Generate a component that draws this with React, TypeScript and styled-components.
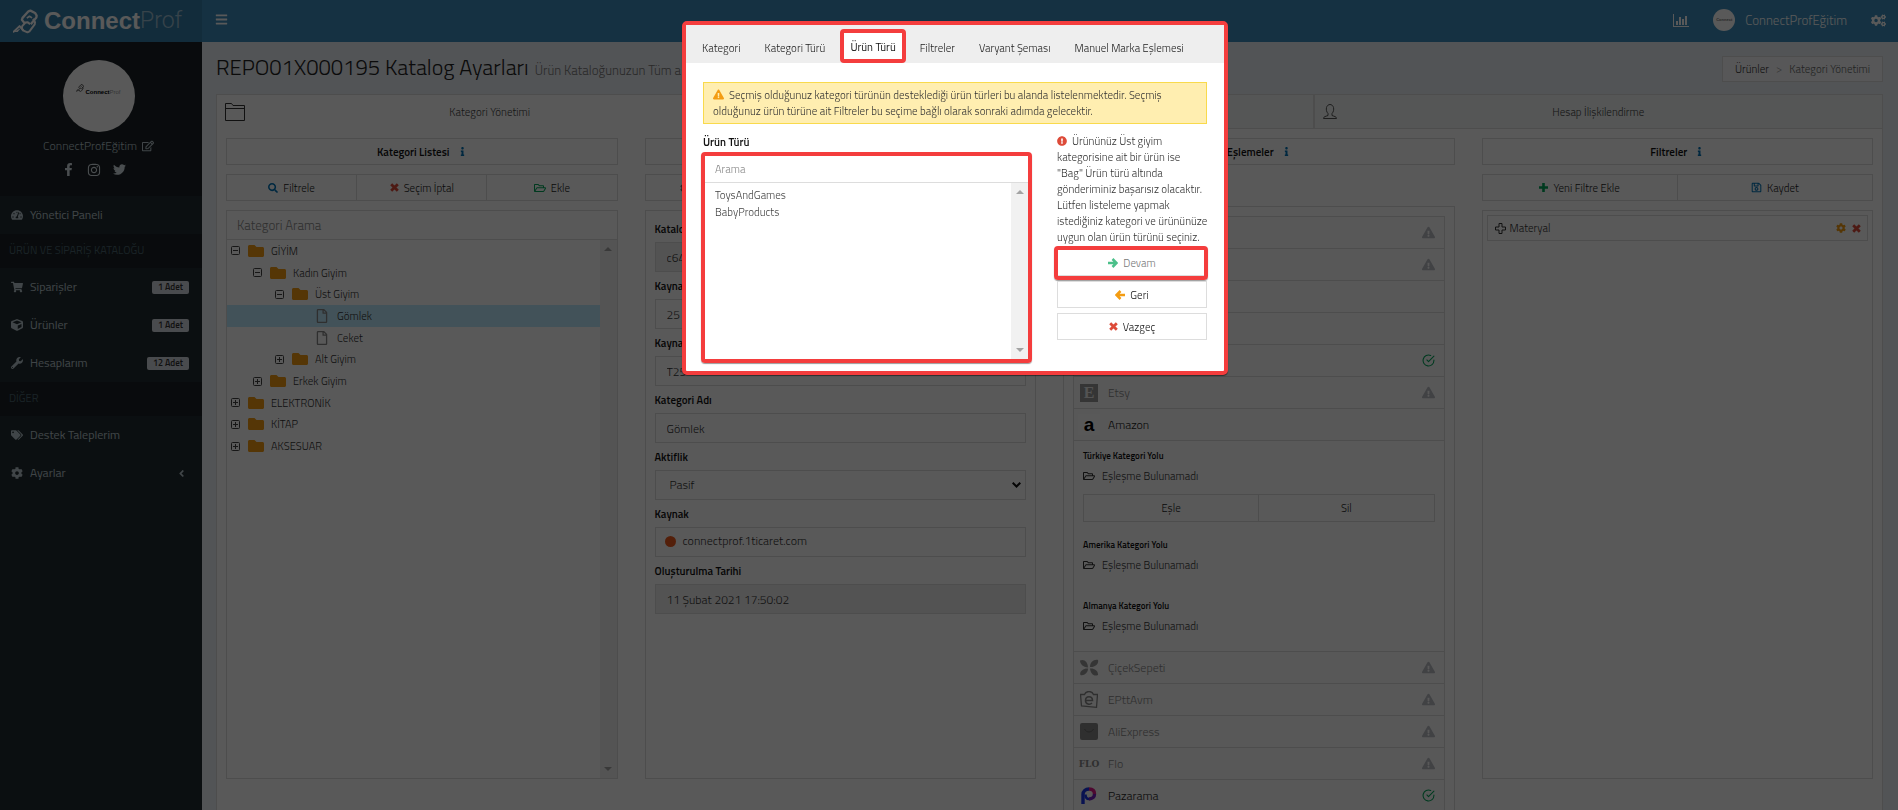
import React from 'react';
import styled, { createGlobalStyle, css } from 'styled-components';
import {
  FaAngleLeft, FaBars, FaCog, FaCogs, FaCube, FaExclamationCircle, FaExclamationTriangle, FaFacebookF,
  FaFolder, FaInfo, FaInstagram, FaRegEdit, FaRegFile, FaRegFolderOpen, FaRegSave, FaSearch,
  FaShoppingCart, FaTachometerAlt, FaTags, FaTwitter, FaWrench,
} from 'react-icons/fa';
import { FiCheckCircle } from 'react-icons/fi';

const c = {
  blue: '#3c8dbc', blueDark: '#367fa9', side: '#222d32', sideDark: '#1a2226', page: '#ecf0f5',
  line: '#dddddd', text: '#333333', strong: '#111111', muted: '#666666', red: '#dd4b39',
  green: '#00a65a', orange: '#f39c12', info: '#0073b7', mark: '#f43d3d',
};

const GlobalStyle = createGlobalStyle`
  *, *::before, *::after { box-sizing: border-box; }
  body {
    margin: 0; overflow: hidden; background: ${c.page}; color: ${c.text};
    font: 300 11px/16px 'Titillium Web', 'Roboto', sans-serif;
  }
  h1, h2, p, ul { margin: 0; padding: 0; font-weight: inherit; font-size: inherit; }
  ul { list-style: none; }
  button, input, select { font: inherit; color: inherit; border-radius: 0; margin: 0; }
  button { cursor: pointer; }
  a { color: inherit; text-decoration: none; }
  svg { flex: none; display: block; }
`;

/* ---------- top bar ---------- */
const Header = styled.header`display: flex; height: 42px; background: ${c.blue}; color: #fff;`;
const Brand = styled.a`
  display: flex; align-items: center; width: 202px; padding: 0 0 0 13px; gap: 6px;
  background: ${c.blueDark}; color: #fff;
`;
const BrandName = styled.span`font: 700 24px/42px 'Liberation Sans', Arial, sans-serif; display: flex;`;
const BrandThin = styled.span`font: 300 23px/42px Roboto, sans-serif; color: #9fc0d4;`;
const BarButton = styled.button`
  display: flex; align-items: center; padding: 0 13px 4px; border: 0; background: none; color: #fff;
`;
const BarRight = styled.nav`display: flex; align-items: center; margin-left: auto; padding-bottom: 2px;`;
const BarLink = styled.a`display: flex; align-items: center; gap: 10px; padding: 0 12px; font-size: 13px;`;
const SmallAvatar = styled.span`
  display: grid; place-items: center; width: 22px; height: 22px; border-radius: 50%; background: #fff;
  color: #777; font: 700 4px/6px 'Liberation Sans', sans-serif;
`;

/* ---------- sidebar ---------- */
const Shell = styled.div`display: grid; grid-template-columns: 202px minmax(0, 1fr); min-height: calc(100vh - 42px);`;
const Sidebar = styled.aside`background: ${c.side}; color: #b8c7ce; font-size: 12px; font-weight: 400;`;
const Profile = styled.div`
  display: flex; flex-direction: column; align-items: center; height: 154px; padding: 18px 5px 0 0;
  background: ${c.sideDark};
`;
const Avatar = styled.span`
  display: flex; justify-content: center; padding-top: 24px; gap: 1px; width: 72px; height: 72px;
  border-radius: 50%; background: #fff; color: #000;
`;
const AvatarName = styled.span`font: 700 6px/16px 'Liberation Sans', sans-serif; i { font-style: normal; font-weight: 400; color: #999; }`;
const ProfileName = styled.a`display: flex; align-items: center; gap: 5px; margin-top: 6px; font-weight: 300; color: #b8c7ce;`;
const Social = styled.div`display: flex; gap: 12px; margin-top: 9px; padding-right: 10px; color: #d5dfe4;`;
const SideItem = styled.a`display: flex; align-items: center; height: 38px; padding: 0 13px 0 11px; gap: 6px;`;
const SideIcon = styled.span`display: flex; width: 13px;`;
const SideTitle = styled.h2`
  height: 34px; padding-left: 9px; background: ${c.sideDark}; color: #4b646f; font-size: 11px; line-height: 32px;
`;
const Badge = styled.span`
  margin-left: auto; height: 13px; padding: 0 6px; border-radius: 2px; background: #d2d6de; color: #333;
  font-size: 9px; font-weight: 600; line-height: 12px;
`;
const Caret = styled(FaAngleLeft)`margin-left: auto; margin-right: 2px;`;

/* ---------- page ---------- */
const Main = styled.main`padding: 14px 15px 0 14px;`;
const TitleRow = styled.div`display: flex; align-items: flex-start; height: 38px; white-space: nowrap;`;
const Title = styled.h1`font-size: 22px; font-weight: 300; line-height: 22px; color: #222;`;
const SubTitle = styled.small`margin-left: 6px; font-size: 13px; color: #777;`;
const Crumbs = styled.nav`
  display: flex; align-items: center; gap: 7px; height: 26px; margin-left: auto; padding: 0 12px;
  border: 1px solid ${c.line}; background: #f9fafc; color: ${c.muted};
  a { color: #333; } span { color: #999; }
`;
const Box = styled.section`height: calc(100vh - 60px); border: 1px solid ${c.line}; background: #fff;`;
const Tabs = styled.div`display: grid; grid-template-columns: 546fr 551fr 570fr; height: 34px;`;
const Tab = styled.button<{ $on?: boolean }>`
  display: grid; grid-template-columns: 20px 1fr 20px; align-items: center; padding: 0 8px; border: 0;
  background: #fff; color: #444;
  ${p => !p.$on && css`background: #f3f7f6; border-left: 2px solid ${c.line}; border-bottom: 1px solid ${c.line};`}
`;
const Columns = styled.div`
  display: grid; grid-template-columns: repeat(4, minmax(0, 1fr)); align-items: start; gap: 27px; padding: 9px;
`;
const Column = styled.div`display: flex; flex-direction: column; gap: 9px;`;
const ColumnTitle = styled.h2`
  display: flex; align-items: center; justify-content: center; gap: 8px; height: 27px;
  border: 1px solid ${c.line}; color: ${c.strong}; font-weight: 600; svg { color: ${c.info}; }
`;
const ButtonRow = styled.div`display: flex; height: 27px; border: 1px solid ${c.line};`;
const RowButton = styled.button<{ $start?: boolean }>`
  display: flex; flex: 1; align-items: center; justify-content: ${p => (p.$start ? 'flex-start' : 'center')};
  gap: 5px; padding: 0 ${p => (p.$start ? 34 : 8)}px; border: 0; background: #fff; color: #222; white-space: nowrap;
  & + & { border-left: 1px solid ${c.line}; }
`;
const Spacer = styled.div`height: 23px;`;
const Panel = styled.div<{ $pad: number; $grow?: boolean }>`
  min-height: calc(100vh - 241px); padding: ${p => p.$pad}px; border: 1px solid ${c.line};
  ${p => !p.$grow && css`height: calc(100vh - 241px);`}
`;
const Search = styled.input<{ $small?: boolean }>`
  display: block; width: 100%; height: ${p => (p.$small ? 27 : 29)}px; padding: 0 10px; border: 0; outline: 0;
  border-bottom: 1px solid ${c.line}; font-size: ${p => (p.$small ? 11 : 13)}px; background: #fff;
  &::placeholder { color: #888; opacity: 1; }
`;
const TreeBody = styled.div`display: flex; height: calc(100% - 29px);`;
const Tree = styled.ul`
  flex: 1; display: grid; grid-auto-rows: 1fr; height: 217px;
`;
const Node = styled.li<{ $depth: number; $on?: boolean }>`
  display: flex; align-items: center; padding-left: ${p => 4 + p.$depth * 22}px;
  background: ${p => (p.$on ? '#beebff' : 'transparent')};
`;
const Toggle = styled.button`display: flex; width: 9px; padding: 0; border: 0; background: none; color: #444;`;
const NodeIcon = styled.span`display: flex; justify-content: center; width: 16px; margin: 0 7px 0 8px;`;
const Rail = styled.div`
  display: flex; flex-direction: column; justify-content: space-between; align-items: center; width: 17px;
  padding: 7px 0; background: #f1f1f1; color: #a3a3a3;
`;

/* ---------- form ---------- */
const Form = styled.form`display: grid; gap: 5px;`;
const Field = styled.div`display: grid; gap: 4px;`;
const Label = styled.label`color: ${c.strong}; font-weight: 600; line-height: 18px;`;
const control = css`width: 100%; height: 30px; border: 1px solid ${c.line}; color: #333; font-size: 12px; outline: 0;`;
const Input = styled.input`${control} padding: 0 11px; background: #fff; &:read-only { background: #eee; }`;
const SelectWrap = styled.div`display: grid; > * { grid-area: 1 / 1; } svg { align-self: center; justify-self: end; margin-right: 5px; pointer-events: none; }`;
const Select = styled.select`${control} padding: 0 14px; background: #fff; appearance: none;`;
const SourceBox = styled.output`${control} display: flex; align-items: center; gap: 7px; padding: 0 9px 2px;`;
const Dot = styled.span`width: 11px; height: 11px; border-radius: 50%; background: #ee5a1e;`;

/* ---------- marketplaces ---------- */
const Markets = styled.ul`border: 1px solid ${c.line}; border-top: 0;`;
const Market = styled.li`border-top: 1px solid ${c.line}; background: #fbfbfb;`;
const MarketHead = styled.div<{ $off?: boolean }>`
  display: grid; grid-template-columns: 22px 1fr 14px; align-items: center; gap: 8px; height: 31px;
  padding: 0 8px 0 4px; color: ${p => (p.$off ? '#888' : '#222')}; font-size: 12px;
`;
const Mark = styled.span`display: grid; place-items: center;`;
const EtsyMark = styled.b`width: 18px; background: #999; color: #eee; font: 700 16px/18px 'Liberation Serif', serif; text-align: center;`;
const AmazonMark = styled.b`width: 22px; background: #fff; color: #000; font: 700 19px/21px 'Liberation Sans', sans-serif; text-align: center;`;
const FloMark = styled.b`color: #888; font: 700 9px/12px 'DejaVu Serif', serif;`;
const MarketBody = styled.div`height: 211px; padding: 8px 9px 0; border-top: 1px solid ${c.line}; background: #fff;`;
const Path = styled.div<{ $after: number }>`margin-bottom: ${p => p.$after}px;`;
const PathLabel = styled.h2`font-size: 9px; font-weight: 600; line-height: 14px; color: ${c.strong};`;
const PathValue = styled.p`display: flex; align-items: center; gap: 7px; margin-top: 3px; line-height: 20px;`;
const PathButtons = styled(ButtonRow)`height: 28px; margin-top: 8px;`;
const FilterItem = styled.div`
  display: flex; align-items: center; gap: 4px; height: 26px; padding: 0 5px 0 7px; border: 1px solid ${c.line};
  span { flex: 1; }
`;
const IconButton = styled.button`display: flex; padding: 0 1px; border: 0; background: none;`;

/* ---------- dialog ---------- */
const Backdrop = styled.div`
  position: fixed; inset: 0; display: flex; justify-content: center; align-items: flex-start;
  padding: 21px 0 0 12px; background: rgba(0, 0, 0, 0.65);
`;
const Dialog = styled.div`
  width: 546px; border: 4px solid ${c.mark}; border-radius: 5px; background: #fff; color: #333;
  box-shadow: 0 1px 1px rgba(0, 0, 0, 0.5);
`;
const Steps = styled.div`display: flex; align-items: flex-end; height: 38px; padding: 0 4px; background: #eee;`;
const Step = styled.button<{ $on?: boolean }>`
  height: 34px; padding: 3px 12px 0; border: 0; background: none; color: #222; white-space: nowrap;
  ${p => p.$on && css`
    padding: 2px 6px 0; margin: 0 2px 0 3px; border: 4px solid ${c.mark}; border-radius: 4px; background: #fff;
    color: #111; font-weight: 400;
  `}
`;
const DialogBody = styled.div`padding: 19px 17px 8px;`;
const Alert = styled.p`
  padding: 4px 9px; border: 1px solid #f9da4c; background: #ffeeb0;
  svg { display: inline-block; vertical-align: -1px; margin-right: 5px; }
`;
const Split = styled.div`display: grid; grid-template-columns: minmax(0, 1fr) 150px; gap: 25px; margin-top: 9px;`;
const Picker = styled.div`
  height: 211px; margin: 1px 0 0 -2px; border: 4px solid ${c.mark}; border-radius: 4px;
  box-shadow: 0 1px 1px rgba(0, 0, 0, 0.4);
`;
const PickerBody = styled.div`display: flex; height: 176px;`;
const Options = styled.ul`flex: 1; padding: 4px 10px;`;
const Option = styled.li`line-height: 17px; color: #444;`;
const Notice = styled.p`
  padding-bottom: 4px; white-space: nowrap;
  svg { display: inline-block; vertical-align: -1px; margin-right: 5px; color: ${c.red}; }
`;
const Actions = styled.div`display: grid; gap: 5px;`;
const Action = styled.button<{ $marked?: boolean }>`
  position: relative; display: flex; align-items: center; justify-content: center; gap: 5px; height: 27px;
  border: 1px solid ${c.line}; background: #fff; color: #111;
  ${p => p.$marked && css`
    color: #777; svg { opacity: 0.7; }
    &::after {
      content: ''; position: absolute; inset: -4px -2px -5px -4px; border: 4px solid ${c.mark}; border-radius: 4px;
      box-shadow: 0 1px 1px rgba(0, 0, 0, 0.4);
    }
  `}
`;

/* ---------- drawings ---------- */
const ChainLogo = ({ size, color }: { size: number; color: string }) => (
  <svg width={size} height={size} viewBox="0 0 76 76" fill="none" stroke={color} strokeWidth="7" strokeLinejoin="round">
    <path d="M36 44 27 33 29 27 47 7 53 5 67 12 72 20 71 26 54 46" />
    <path d="M61 30 67 40 66 47 50 68 44 71 30 65 27 58 28 52 38 41 44 40 52 46" strokeWidth="6" />
    <path d="M42 28 50 22 58 27" strokeWidth="5" />
    <path d="M0 71 20 52 32 66" strokeWidth="6" />
    <path d="M2 70h12L24 58z" fill={color} stroke="none" />
  </svg>
);
const ChartIcon = () => (
  <svg width="16" height="13" viewBox="0 0 16 13" fill="currentColor">
    <path d="M0 0h1v12h15v1H0zM3 7h2v4H3zM6 3h2v8H6zM9 5h2v6H9zM12 2h2v9h-2z" />
  </svg>
);
const FolderOutline = () => (
  <svg width="20" height="18" viewBox="0 0 20 18" fill="none" stroke="#333"><path d="M.5 17.500V.5h6l1.500 2h11.500v15zM.5 5.500h19" /></svg>
);
const PersonOutline = () => (
  <svg width="14" height="15" viewBox="0 0 14 15" fill="none" stroke="#555">
    <path d="M.5 14.500h13M.5 14.500c0-2 2-2 4.500-3V9.500C3.500 8 3 5.500 3.500 3.500 4 1.500 5.500.5 7 .5s3 1 3.500 3C11 5.500 10.500 8 9 9.500v2c2.500 1 4.500 1 4.500 3" />
  </svg>
);
const ToggleIcon = ({ open }: { open: boolean }) => (
  <svg width="9" height="9" viewBox="0 0 9 9" fill="none" stroke="currentColor">
    <rect x=".5" y=".5" width="8" height="8" rx="1" /><path d={open ? 'M2 4.500h5' : 'M2 4.500h5M4.500 2v5'} />
  </svg>
);
const Arrow = ({ down }: { down?: boolean }) => (
  <svg width="8" height="4" viewBox="0 0 8 4" fill="currentColor"><path d={down ? 'M0 0h8L4 4z' : 'M0 4h8L4 0z'} /></svg>
);
const Cross = () => (
  <svg width="9" height="9" viewBox="0 0 9 9" stroke={c.red} strokeWidth="2.800"><path d="M1.200 1.200 7.800 7.800M7.800 1.200 1.200 7.800" /></svg>
);
const Plus = () => (
  <svg width="9" height="9" viewBox="0 0 9 9" stroke={c.green} strokeWidth="2.600"><path d="M0 4.500h9M4.500 0v9" /></svg>
);
const WayArrow = ({ back }: { back?: boolean }) => (
  <svg width="10" height="10" viewBox="0 0 10 10" fill="none" stroke={back ? c.orange : c.green} strokeWidth="2.500">
    <path d={back ? 'M10 5H2M5.500 1 1.500 5l4 4' : 'M0 5h8M4.500 1l4 4-4 4'} />
  </svg>
);
const CrossOutline = () => (
  <svg width="11" height="11" viewBox="0 0 11 11" fill="none" stroke="#333" strokeLinejoin="round">
    <path d="M4 .5h3V4h3.500v3H7v3.500H4V7H.5V4H4z" />
  </svg>
);
const SelectArrow = () => (
  <svg width="9" height="6" viewBox="0 0 9 6" fill="none" stroke="#111" strokeWidth="2"><path d="m.7.7 3.800 3.800L8.300.7" /></svg>
);
const FlowerMark = () => (
  <svg width="20" height="18" viewBox="0 0 20 18" fill="#999">
    <path d="M9 8.500C4 8 1 5 1 1.500 5-.5 9 3 9 8.500zM11 8c0-5 4-8 8-7 1 4-3 7.500-8 7zM9 9.500C9 14 5 17 1.500 16 0 13 4 9 9 9.500zM11 9.500c4.500-.5 8.500 2.500 8 6.500-4 2-7.500-1.500-8-6.500z" />
  </svg>
);
const BagMark = () => (
  <svg width="18" height="17" viewBox="0 0 18 17" fill="none" stroke="#888" strokeWidth="1.300">
    <path d="M4.500 3.500h-4l1 11.500 15 1.300 1-12.800h-4C12-.5 6-.5 4.500 3.500z" />
    <path d="M5.500 9.500h7c0-5-7-5-7 0 0 4 4.500 4.500 6.500 2.500" strokeWidth="1.500" />
  </svg>
);
const ExpressMark = () => (
  <svg width="18" height="17" viewBox="0 0 18 17"><rect width="18" height="17" rx="2" fill="#888" /><path d="M4.500 6c2 4 7 4 9 0" fill="none" stroke="#666" /></svg>
);
const PazaramaMark = () => (
  <svg width="16" height="17" viewBox="0 0 16 17" fill="none" strokeWidth="3.400">
    <path d="M2 17V7.500C2 4 4.500 2 8 2" stroke="#1a35e8" />
    <path d="M8 2c3.500 0 5.500 2 5.500 5" stroke="#e0188a" />
    <path d="M13.500 7c0 3-2 5-5.500 5" stroke="#7a1fc0" />
    <path d="M8 12c-2.500 0-3.500-2-3.500-4.500" stroke="#1a35e8" strokeWidth="2.500" />
  </svg>
);

/* ---------- data ---------- */
type TreeNode = { name: string; depth: number; kind: 'open' | 'closed' | 'leaf'; on?: boolean };
const tree: TreeNode[] = [
  { name: 'GİYİM', depth: 0, kind: 'open' },
  { name: 'Kadın Giyim', depth: 1, kind: 'open' },
  { name: 'Üst Giyim', depth: 2, kind: 'open' },
  { name: 'Gömlek', depth: 3, kind: 'leaf', on: true },
  { name: 'Ceket', depth: 3, kind: 'leaf' },
  { name: 'Alt Giyim', depth: 2, kind: 'closed' },
  { name: 'Erkek Giyim', depth: 1, kind: 'closed' },
  { name: 'ELEKTRONİK', depth: 0, kind: 'closed' },
  { name: 'KİTAP', depth: 0, kind: 'closed' },
  { name: 'AKSESUAR', depth: 0, kind: 'closed' },
];
const menu = [
  { name: 'Siparişler', icon: <FaShoppingCart size={12} />, count: '1 Adet' },
  { name: 'Ürünler', icon: <FaCube size={12} />, count: '1 Adet' },
  { name: 'Hesaplarım', icon: <FaWrench size={12} />, count: '12 Adet' },
];

const Warn = () => <FaExclamationTriangle size={13} color="#b9bcc4" />;
const Check = () => <FiCheckCircle size={13} color={c.green} />;
const MarketRow = ({ mark, name, state, off, children }: {
  mark?: React.ReactNode; name?: string; state?: 'warn' | 'ok'; off?: boolean; children?: React.ReactNode;
}) => (
  <Market>
    <MarketHead $off={off}>
      <Mark>{mark}</Mark><span>{name}</span>
      {state === 'warn' && <Warn />}{state === 'ok' && <Check />}
    </MarketHead>
    {children}
  </Market>
);
const CategoryPath = ({ title, after, children }: { title: string; after: number; children?: React.ReactNode }) => (
  <Path $after={after}>
    <PathLabel>{title}</PathLabel>
    <PathValue><FaRegFolderOpen size={12} />Eşleşme Bulunamadı</PathValue>
    {children}
  </Path>
);
const TextField = ({ id, label, value, readOnly }: { id: string; label: string; value: string; readOnly?: boolean }) => (
  <Field><Label htmlFor={id}>{label}</Label><Input id={id} defaultValue={value} readOnly={readOnly} /></Field>
);
const ScrollRail = () => <Rail aria-hidden><Arrow /><Arrow down /></Rail>;

export default function App() {
  return (
    <>
      <GlobalStyle />
      <Header>
        <Brand href="#"><ChainLogo size={25} color="#fff" /><BrandName>Connect<BrandThin>Prof</BrandThin></BrandName></Brand>
        <BarButton aria-label="Menü"><FaBars size={13} /></BarButton>
        <BarRight>
          <BarLink href="#" aria-label="Raporlar"><ChartIcon /></BarLink>
          <BarLink href="#"><SmallAvatar>Connect</SmallAvatar>ConnectProfEğitim</BarLink>
          <BarLink href="#" aria-label="Ayarlar"><FaCogs size={15} /></BarLink>
        </BarRight>
      </Header>
      <Shell>
        <Sidebar>
          <Profile>
            <Avatar><ChainLogo size={8} color="#222" /><AvatarName>Connect<i>Prof</i></AvatarName></Avatar>
            <ProfileName href="#">ConnectProfEğitim <FaRegEdit size={12} /></ProfileName>
            <Social>
              <a href="#" aria-label="Facebook"><FaFacebookF size={13} /></a>
              <a href="#" aria-label="Instagram"><FaInstagram size={14} /></a>
              <a href="#" aria-label="Twitter"><FaTwitter size={13} /></a>
            </Social>
          </Profile>
          <SideItem href="#"><SideIcon><FaTachometerAlt size={12} /></SideIcon>Yönetici Paneli</SideItem>
          <SideTitle>ÜRÜN VE SİPARİŞ KATALOĞU</SideTitle>
          {menu.map(m => (
            <SideItem href="#" key={m.name}><SideIcon>{m.icon}</SideIcon>{m.name}<Badge>{m.count}</Badge></SideItem>
          ))}
          <SideTitle>DİĞER</SideTitle>
          <SideItem href="#"><SideIcon><FaTags size={12} /></SideIcon>Destek Taleplerim</SideItem>
          <SideItem href="#"><SideIcon><FaCog size={12} /></SideIcon>Ayarlar<Caret size={11} /></SideItem>
        </Sidebar>
        <Main>
          <TitleRow>
            <Title>REPO01X000195 Katalog Ayarları<SubTitle>Ürün Kataloğunuzun Tüm a</SubTitle></Title>
            <Crumbs><a href="#">Ürünler</a><span>&gt;</span>Kategori Yönetimi</Crumbs>
          </TitleRow>
          <Box>
            <Tabs>
              <Tab $on><FolderOutline />Kategori Yönetimi</Tab>
              <Tab aria-label="Sekme" />
              <Tab><PersonOutline />Hesap İlişkilendirme</Tab>
            </Tabs>
            <Columns>
              <Column>
                <ColumnTitle>Kategori Listesi<FaInfo size={9} /></ColumnTitle>
                <ButtonRow>
                  <RowButton><FaSearch size={10} color={c.info} />Filtrele</RowButton>
                  <RowButton><Cross />Seçim İptal</RowButton>
                  <RowButton><FaRegFolderOpen size={12} color={c.green} />Ekle</RowButton>
                </ButtonRow>
                <Panel $pad={0}>
                  <Search placeholder="Kategori Arama" aria-label="Kategori Arama" />
                  <TreeBody>
                    <Tree>
                      {tree.map(n => (
                        <Node key={n.name} $depth={n.depth} $on={n.on}>
                          {n.kind === 'leaf'
                            ? <><Toggle as="span" /><NodeIcon><FaRegFile size={14} color="#888" /></NodeIcon></>
                            : <><Toggle aria-label={n.name}><ToggleIcon open={n.kind === 'open'} /></Toggle><NodeIcon><FaFolder size={16} color={c.orange} /></NodeIcon></>}
                          {n.name}
                        </Node>
                      ))}
                    </Tree>
                    <ScrollRail />
                  </TreeBody>
                </Panel>
              </Column>
              <Column>
                <ColumnTitle />
                <ButtonRow><RowButton $start aria-label="Kaydet"><FaCog size={10} color="#777" /></RowButton></ButtonRow>
                <Panel $pad={9}>
                  <Form>
                    <TextField id="catalog" label="Katalog" value="c64" readOnly />
                    <TextField id="source-id" label="Kaynak" value="25" />
                    <TextField id="source-code" label="Kaynak" value="T25" />
                    <TextField id="name" label="Kategori Adı" value="Gömlek" />
                    <Field>
                      <Label htmlFor="active">Aktiflik</Label>
                      <SelectWrap><Select id="active"><option>Pasif</option></Select><SelectArrow /></SelectWrap>
                    </Field>
                    <Field><Label htmlFor="source">Kaynak</Label><SourceBox id="source"><Dot />connectprof.1ticaret.com</SourceBox></Field>
                    <TextField id="date" label="Oluşturulma Tarihi" value="11 Şubat 2021 17:50:02" readOnly />
                  </Form>
                </Panel>
              </Column>
              <Column>
                <ColumnTitle>Eşlemeler<FaInfo size={9} /></ColumnTitle>
                <Spacer />
                <Panel $pad={9} $grow>
                  <Markets>
                    <MarketRow state="warn" />
                    <MarketRow state="warn" />
                    <MarketRow />
                    <MarketRow />
                    <MarketRow state="ok" />
                    <MarketRow mark={<EtsyMark>E</EtsyMark>} name="Etsy" state="warn" off />
                    <MarketRow mark={<AmazonMark>a</AmazonMark>} name="Amazon">
                      <MarketBody>
                        <CategoryPath title="Türkiye Kategori Yolu" after={16}>
                          <PathButtons><RowButton>Eşle</RowButton><RowButton>Sil</RowButton></PathButtons>
                        </CategoryPath>
                        <CategoryPath title="Amerika Kategori Yolu" after={24} />
                        <CategoryPath title="Almanya Kategori Yolu" after={16} />
                      </MarketBody>
                    </MarketRow>
                    <MarketRow mark={<FlowerMark />} name="ÇiçekSepeti" state="warn" off />
                    <MarketRow mark={<BagMark />} name="EPttAvm" state="warn" off />
                    <MarketRow mark={<ExpressMark />} name="AliExpress" state="warn" off />
                    <MarketRow mark={<FloMark>FLO</FloMark>} name="Flo" state="warn" off />
                    <MarketRow mark={<PazaramaMark />} name="Pazarama" state="ok" />
                  </Markets>
                </Panel>
              </Column>
              <Column>
                <ColumnTitle>Filtreler<FaInfo size={9} /></ColumnTitle>
                <ButtonRow>
                  <RowButton><Plus />Yeni Filtre Ekle</RowButton>
                  <RowButton><FaRegSave size={11} color={c.info} />Kaydet</RowButton>
                </ButtonRow>
                <Panel $pad={4}>
                  <FilterItem>
                    <CrossOutline /><span>Materyal</span>
                    <IconButton aria-label="Düzenle"><FaCog size={10} color={c.orange} /></IconButton>
                    <IconButton aria-label="Sil"><Cross /></IconButton>
                  </FilterItem>
                </Panel>
              </Column>
            </Columns>
          </Box>
        </Main>
      </Shell>
      <Backdrop>
        <Dialog role="dialog" aria-label="Ürün Türü">
          <Steps>
            <Step>Kategori</Step><Step>Kategori Türü</Step><Step $on>Ürün Türü</Step>
            <Step>Filtreler</Step><Step>Varyant Şeması</Step><Step>Manuel Marka Eşlemesi</Step>
          </Steps>
          <DialogBody>
            <Alert>
              <FaExclamationTriangle size={11} color={c.orange} />Seçmiş olduğunuz kategori türünün desteklediği ürün türleri bu alanda listelenmektedir. Seçmiş olduğunuz ürün türüne ait Filtreler bu seçime bağlı olarak sonraki adımda gelecektir.
            </Alert>
            <Split>
              <div>
                <Label htmlFor="type-search">Ürün Türü</Label>
                <Picker>
                  <Search $small id="type-search" placeholder="Arama" />
                  <PickerBody>
                    <Options role="listbox"><Option role="option">ToysAndGames</Option><Option role="option">BabyProducts</Option></Options>
                    <ScrollRail />
                  </PickerBody>
                </Picker>
              </div>
              <div>
                <Notice>
                  <FaExclamationCircle size={10} />Ürününüz Üst giyim<br />
                  kategorisine ait bir ürün ise<br />
                  "Bag" Ürün türü altında<br />
                  gönderiminiz başarısız olacaktır.<br />
                  Lütfen listeleme yapmak<br />
                  istediğiniz kategori ve ürününüze<br />
                  uygun olan ürün türünü seçiniz.
                </Notice>
                <Actions>
                  <Action $marked><WayArrow />Devam</Action>
                  <Action><WayArrow back />Geri</Action>
                  <Action><Cross />Vazgeç</Action>
                </Actions>
              </div>
            </Split>
          </DialogBody>
        </Dialog>
      </Backdrop>
    </>
  );
}
